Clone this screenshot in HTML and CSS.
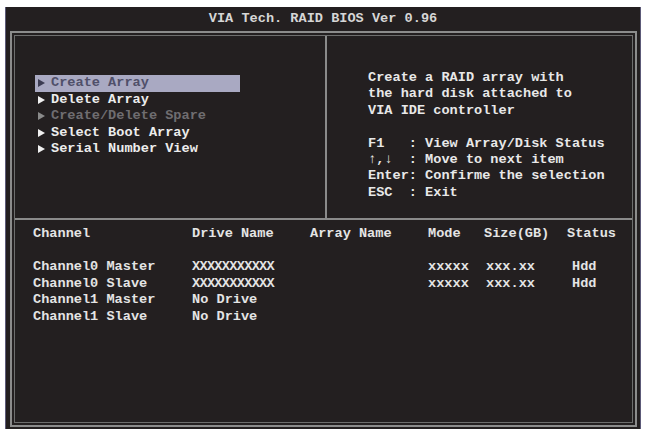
FILE: index.html
```html
<!DOCTYPE html>
<html>
<head>
<meta charset="utf-8">
<link rel="stylesheet" href="styles.css">
</head>
<body>
<div class="screen">
  <div class="title">VIA Tech. RAID BIOS Ver 0.96</div>
  <div class="frame">
    <div class="frame-inner">
      <div class="top">
        <div class="menu-panel">
          <div class="menu">
            <div class="item active"><span class="tri"></span>Create Array</div>
            <div class="item"><span class="tri"></span>Delete Array</div>
            <div class="item disabled"><span class="tri"></span>Create/Delete Spare</div>
            <div class="item"><span class="tri"></span>Select Boot Array</div>
            <div class="item"><span class="tri"></span>Serial Number View</div>
          </div>
        </div>
        <div class="help-panel">
          <div class="help-line">Create a RAID array with</div>
          <div class="help-line">the hard disk attached to</div>
          <div class="help-line">VIA IDE controller</div>
          <div class="help-line blank">&nbsp;</div>
          <div class="help-line">F1   : View Array/Disk Status</div>
          <div class="help-line">↑,↓  : Move to next item</div>
          <div class="help-line">Enter: Confirme the selection</div>
          <div class="help-line">ESC  : Exit</div>
        </div>
      </div>
      <div class="bottom">
        <div class="table">
          <div class="row head">
            <span>Channel</span><span>Drive Name</span><span>Array Name</span><span>Mode</span><span>Size(GB)</span><span>Status</span>
          </div>
          <div class="row">
            <span>Channel0 Master</span><span class="xs">XXXXXXXXXXX</span><span></span><span>xxxxx</span><span class="sz">xxx.xx</span><span class="st">Hdd</span>
          </div>
          <div class="row">
            <span>Channel0 Slave</span><span class="xs">XXXXXXXXXXX</span><span></span><span>xxxxx</span><span class="sz">xxx.xx</span><span class="st">Hdd</span>
          </div>
          <div class="row">
            <span>Channel1 Master</span><span>No Drive</span><span></span><span></span><span></span><span></span>
          </div>
          <div class="row">
            <span>Channel1 Slave</span><span>No Drive</span><span></span><span></span><span></span><span></span>
          </div>
        </div>
      </div>
    </div>
  </div>
</div>
</body>
</html>
```

FILE: styles.css
```css
html, body {
  margin: 0;
  padding: 0;
  background: #ffffff;
}

body {
  padding: 7px 0 0 5px;
  font-family: "Liberation Mono", "DejaVu Sans Mono", monospace;
  font-weight: bold;
  font-size: 13.6px;
  color: #e4e4e4;
}

.screen {
  width: 634px;
  height: 422px;
  background: #231f20;
  border-left: 1px solid #5c5a78;
  border-right: 1px solid #5c5a78;
  display: flex;
  flex-direction: column;
}

.title {
  height: 24px;
  line-height: 24px;
  text-align: center;
  color: #d6d6d6;
  white-space: pre;
}

.frame {
  margin: 0 3px 2px 4px;
  flex: 1;
  border: 2px solid #8c8c8c;
  padding: 2px;
  display: flex;
}

.frame-inner {
  flex: 1;
  border: 1px solid #6e6e6e;
  display: flex;
  flex-direction: column;
}

.top {
  height: 182px;
  display: flex;
  border-bottom: 2px solid #8a8a8a;
}

.menu-panel {
  width: 312px;
  border-right: 2px solid #8a8a8a;
  padding: 39px 0 0 20px;
  box-sizing: border-box;
}

.menu {
  width: 205px;
}

.item {
  height: 16.5px;
  line-height: 16.5px;
  display: flex;
  align-items: center;
  white-space: pre;
  color: #ececec;
}

.item .tri {
  width: 0;
  height: 0;
  border-top: 4.5px solid transparent;
  border-bottom: 4.5px solid transparent;
  border-left: 7px solid #f0f0f0;
  margin: 0 6px 0 3px;
}

.item.active {
  background: #a9a9c2;
  color: #50506a;
}

.item.active .tri {
  border-left-color: #3c3c52;
}

.item.disabled {
  color: #6f6d70;
}

.item.disabled .tri {
  border-left-color: #8a8a8a;
}

.help-panel {
  flex: 1;
  padding: 34px 0 0 41px;
}

.help-line {
  height: 16.4px;
  line-height: 16.4px;
  white-space: pre;
  color: #e8e8e8;
}

.bottom {
  flex: 1;
  padding: 6px 0 0 18px;
}

.row {
  display: grid;
  grid-template-columns: 159px 118px 118px 56px 83px 60px;
  height: 16.5px;
  line-height: 16.5px;
  white-space: pre;
  color: #e4e4e4;
}

.row.head {
  margin-bottom: 16.5px;
}

.xs {
  letter-spacing: -0.7px;
}

.sz {
  padding-left: 2px;
}

.st {
  padding-left: 5px;
}
```
